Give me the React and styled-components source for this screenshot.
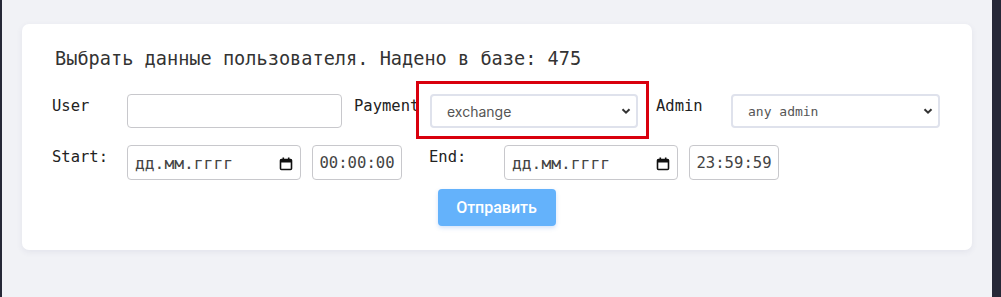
import styled, { createGlobalStyle } from "styled-components";

const Global = createGlobalStyle`
  html, body { margin: 0; padding: 0; }
  body { background: #f1f2f6; font-family: "DejaVu Sans Mono", monospace; }
`;

const Page = styled.div`
  display: flex;
  height: 297px;
  background: #f1f2f6;
`;

const Edge = styled.div`
  width: ${(p) => p.w}px;
  background: #262837;
  flex-shrink: 0;
`;

const Main = styled.main`
  flex: 1;
  padding: 24px 20px 0;
`;

const Card = styled.section`
  background: #fff;
  border-radius: 7px;
  box-shadow: 0 2px 6px rgba(60, 70, 110, 0.08);
  padding: 21px 30px 24px;
  height: 226px;
  box-sizing: border-box;
`;

const Title = styled.h2`
  margin: 0 0 21px 3px;
  font-family: "DejaVu Sans Mono", monospace;
  font-weight: normal;
  font-size: 18.6px;
  line-height: 28px;
  color: #333;
`;

const Row = styled.div`
  display: flex;
  align-items: flex-start;
  height: 34px;
  margin-bottom: ${(p) => p.mb || 0}px;
`;

const Label = styled.label`
  width: ${(p) => p.w}px;
  margin-left: ${(p) => p.ml || 0}px;
  flex-shrink: 0;
  padding-top: 3px;
  font-size: 15.5px;
  line-height: 19px;
  color: #222;
`;

const TextInput = styled.input`
  box-sizing: border-box;
  width: ${(p) => p.w}px;
  height: 34px;
  border: 1px solid #c8c8cc;
  border-radius: 4px;
  background: #fff;
  padding: 0 8px;
  outline: none;
`;

const Highlight = styled.div`
  border: 3px solid #d9000d;
  padding: 10px 8px 8px 11px;
  margin: -13px 7px -11px 0;
  width: 208px;
`;

const SelectBox = styled.div`
  box-sizing: border-box;
  display: flex;
  align-items: center;
  justify-content: space-between;
  width: ${(p) => p.w}px;
  height: 34px;
  border: 2px solid #dfe2ec;
  border-radius: 4px;
  padding: 0 4px 0 15px;
  color: #555;
  font-family: ${(p) => (p.mono ? `"DejaVu Sans Mono", monospace` : `"Inter", "Noto Sans", sans-serif`)};
  font-size: ${(p) => (p.mono ? "13px" : "14px")};
  background: #fff;
`;

const Field = styled.div`
  box-sizing: border-box;
  display: flex;
  align-items: center;
  justify-content: space-between;
  width: ${(p) => p.w}px;
  height: ${(p) => p.h || 35}px;
  margin-left: ${(p) => p.ml || 0}px;
  border: 1px solid #c8c8cc;
  border-radius: 4px;
  padding: 2px 7px 0;
  font-size: 16.3px;
  color: #444;
  background: #fff;
`;

const Time = styled(Field)`
  justify-content: center;
  padding: 1px 0 0;
  font-size: 15.6px;
`;

const Actions = styled.div`
  display: flex;
  justify-content: center;
  margin-top: 10px;
`;

const Submit = styled.button`
  width: 118px;
  height: 37px;
  margin-left: -1px;
  border: none;
  border-radius: 4px;
  background: #64b2fb;
  color: #fff;
  font-family: "Roboto", sans-serif;
  font-weight: 500;
  font-size: 16px;
  box-shadow: 0 2px 4px rgba(80, 140, 230, 0.25);
`;

const Chevron = () => (
  <svg width="12" height="12" viewBox="0 0 12 12">
    <path d="M2.5 4.2 L6 7.7 L9.5 4.2" stroke="#333" strokeWidth="2" fill="none" />
  </svg>
);

const Calendar = () => (
  <svg width="14" height="14" viewBox="0 0 14 14">
    <rect x="1.5" y="2.5" width="11" height="10" rx="1" fill="none" stroke="#111" strokeWidth="1.6" />
    <rect x="1.5" y="2.5" width="11" height="3" fill="#111" />
    <rect x="3.5" y="0.5" width="1.6" height="3" fill="#111" />
    <rect x="8.9" y="0.5" width="1.6" height="3" fill="#111" />
  </svg>
);

const DateField = ({ ml }) => (
  <Field w={174} ml={ml}>
    <span>дд.мм.гггг</span>
    <Calendar />
  </Field>
);

export default function App() {
  return (
    <>
      <Global />
      <Page>
        <Edge w={2} />
        <Main>
          <Card>
            <Title>Выбрать данные пользователя. Надено в базе: 475</Title>
            <Row mb={17}>
              <Label w={75}>User</Label>
              <TextInput w={215} />
              <Label w={62} ml={12}>Payment</Label>
              <Highlight>
                <SelectBox w={208}>
                  <span>exchange</span>
                  <Chevron />
                </SelectBox>
              </Highlight>
              <Label w={75}>Admin</Label>
              <SelectBox w={209} mono>
                <span>any admin</span>
                <Chevron />
              </SelectBox>
            </Row>
            <Row>
              <Label w={75}>Start:</Label>
              <DateField />
              <Time w={90} ml={11}>00:00:00</Time>
              <Label w={75} ml={27}>End:</Label>
              <DateField />
              <Time w={90} ml={11}>23:59:59</Time>
            </Row>
            <Actions>
              <Submit>Отправить</Submit>
            </Actions>
          </Card>
        </Main>
        <Edge w={9} />
      </Page>
    </>
  );
}
